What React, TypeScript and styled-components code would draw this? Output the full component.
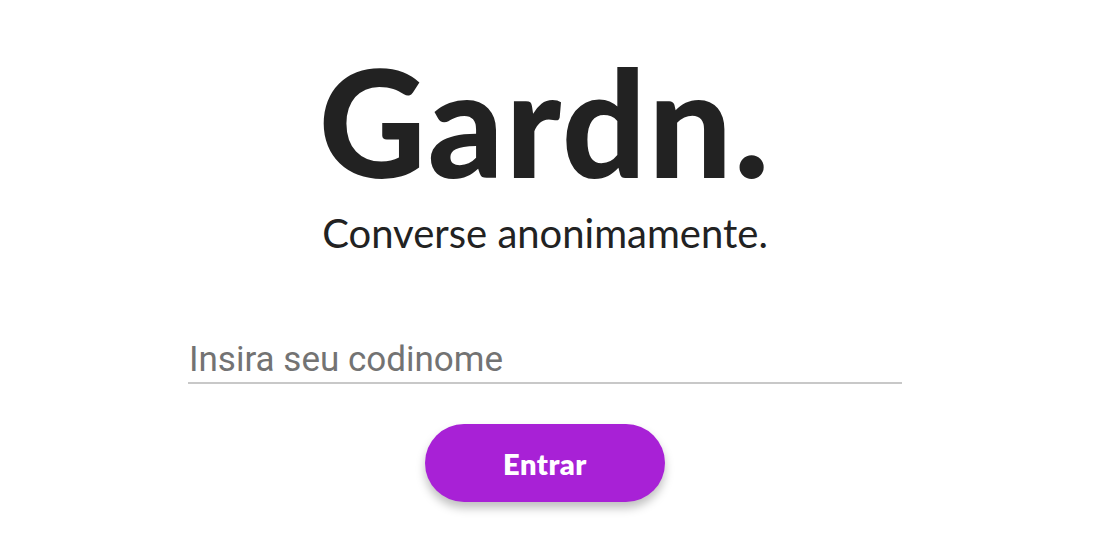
import React from "react";
import styled, { createGlobalStyle } from "styled-components";

const GlobalStyle = createGlobalStyle`
  html, body {
    margin: 0;
    padding: 0;
    background: #ffffff;
  }
  body {
    font-family: "Lato", "Noto Sans", sans-serif;
  }
`;

const Page = styled.main`
  width: 1090px;
  height: 538px;
  display: flex;
  flex-direction: column;
  align-items: center;
  box-sizing: border-box;
  padding-top: 56px;
`;

const Title = styled.h1`
  margin: 0;
  font-size: 148px;
  font-weight: 900;
  line-height: 130px;
  color: #222222;
  letter-spacing: 2px;
`;

const Subtitle = styled.p`
  margin: 22px 0 0;
  font-size: 40px;
  font-weight: 400;
  line-height: 50px;
  color: #222222;
`;

const Form = styled.form`
  display: flex;
  flex-direction: column;
  align-items: center;
  margin-top: 82px;
`;

const Input = styled.input`
  width: 714px;
  box-sizing: border-box;
  border: none;
  border-bottom: 2px solid #c8c8c8;
  outline: none;
  padding: 0 0 2px 1px;
  font-family: "Roboto", sans-serif;
  font-size: 35px;
  line-height: 40px;
  color: #222;
  background: transparent;

  &::placeholder {
    color: #737373;
  }
`;

const Button = styled.button`
  margin-top: 40px;
  width: 240px;
  height: 78px;
  border: none;
  border-radius: 39px;
  background: #a821d6;
  color: #ffffff;
  font-family: "Lato", sans-serif;
  font-size: 29px;
  font-weight: 800;
  letter-spacing: 0.5px;
  box-shadow: 0 6px 10px rgba(0, 0, 0, 0.25);
  cursor: pointer;
`;

export default function App() {
  return (
    <>
      <GlobalStyle />
      <Page>
        <Title>Gardn.</Title>
        <Subtitle>Converse anonimamente.</Subtitle>
        <Form onSubmit={(e) => e.preventDefault()}>
          <Input type="text" placeholder="Insira seu codinome" />
          <Button type="submit">Entrar</Button>
        </Form>
      </Page>
    </>
  );
}
